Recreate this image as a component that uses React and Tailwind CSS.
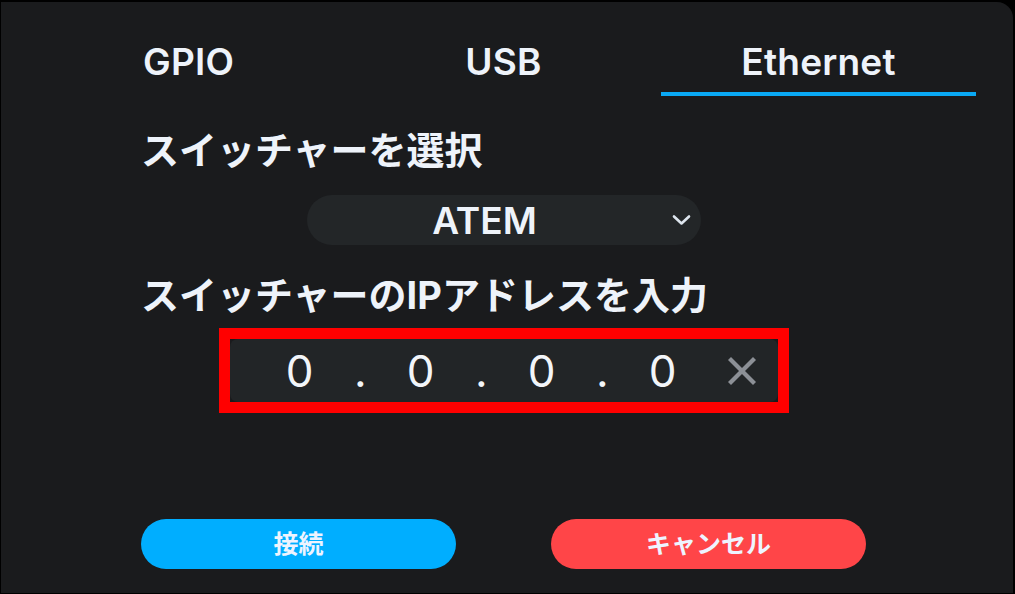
import React from "react";

const font = { fontFamily: '"Inter", "Noto Sans CJK JP", sans-serif' };

function Tab({ label, active }) {
  return (
    <div className="flex flex-col items-center pt-[41px]">
      <div className="text-[37px] leading-[37px] font-semibold text-[#eef3fa] tracking-[0.2px]">{label}</div>
      <div className={"mt-[12px] h-[4px] w-full " + (active ? "bg-[#0aa9f5]" : "bg-transparent")} />
    </div>
  );
}

export default function App() {
  const parts = ["0", ".", "0", ".", "0", ".", "0"];
  return (
    <div className="w-[1015px] h-[594px] bg-black pt-[2px] pl-[1px] pr-[2px] pb-[1px]" style={font}>
      <div className="h-full w-full bg-[#1a1b1d] rounded-tr-[16px]">
        <div className="ml-[30px] w-[945px] flex flex-col">
          <div className="grid grid-cols-3">
            <Tab label="GPIO" />
            <Tab label="USB" />
            <Tab label="Ethernet" active />
          </div>

          <div className="mt-[35px] pl-[110px] text-[38px] leading-[38px] font-bold text-[#eef3fa]">
            スイッチャーを選択
          </div>

          <div className="mt-[26px] mx-auto w-[394px] h-[50px] rounded-full bg-[#232628] flex items-center">
            <div className="flex-1 text-center text-[37px] leading-[37px] font-semibold text-[#eef3fa] pl-[2px]">ATEM</div>
            <div className="w-[40px] flex items-center justify-start pl-[11px]">
              <svg width="19" height="12" viewBox="0 0 19 12" fill="none">
                <polyline points="2,2.5 9.5,9.5 17,2.5" stroke="#dde5ee" strokeWidth="2.6" strokeLinecap="round" strokeLinejoin="round" />
              </svg>
            </div>
          </div>

          <div className="mt-[31px] pl-[110px] text-[38px] leading-[38px] font-bold text-[#eef3fa]">
            スイッチャーのIPアドレスを入力
          </div>

          <div className="mt-[14px] mx-auto w-[570px] h-[85px] border-[11px] border-[#ff0000]">
            <div className="h-full w-full rounded-[8px] bg-[#222527] flex items-center pl-[40px]">
              {parts.map((p, i) => (
                <div key={i} className="w-[60.5px] text-center text-[44px] leading-[44px] font-normal text-[#f2f5f9]">
                  {p}
                </div>
              ))}
              <div className="ml-[34px] flex items-center">
                <svg width="30" height="30" viewBox="0 0 30 30" fill="none">
                  <line x1="2.5" y1="2.5" x2="27.5" y2="27.5" stroke="#8c9096" strokeWidth="4.2" />
                  <line x1="27.5" y1="2.5" x2="2.5" y2="27.5" stroke="#8c9096" strokeWidth="4.2" />
                </svg>
              </div>
            </div>
          </div>

          <div className="mt-[106px] flex justify-center gap-[95px]">
            <div className="w-[315px] h-[50px] rounded-full bg-[#00aeff] flex items-center justify-center text-[25px] leading-[25px] font-bold text-[#eef4ff]">
              接続
            </div>
            <div className="w-[315px] h-[50px] rounded-full bg-[#ff4548] flex items-center justify-center text-[25px] leading-[25px] font-bold text-[#eef4ff]">
              キャンセル
            </div>
          </div>
        </div>
      </div>
    </div>
  );
}
